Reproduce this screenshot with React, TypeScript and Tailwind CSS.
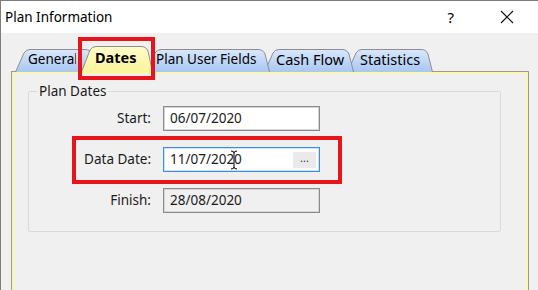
import React from 'react';

type TabProps = { id: string; label: string; w: number; active?: boolean; pl: number; clip?: number; size?: string; className?: string };

function Tab({ id, label, w, active, pl, clip, size, className }: TabProps) {
  const h = active ? 26 : 23;
  const d = `M0.5 ${h} L9 4 Q11 0.5 15 0.5 L${w - 12} 0.5 Q${w - 7} 0.5 ${w - 5} 5 L${w - 0.5} ${h}`;
  return (
    <div className={`relative flex-shrink-0 ${className ?? ''}`} style={{ width: w, height: h }}>
      <svg className="absolute inset-0" width={w} height={h} viewBox={`0 0 ${w} ${h}`}>
        <defs>
          <linearGradient id={`tabgrad-${id}`} x1="0" y1="0" x2="0" y2="1">
            <stop offset="0" stopColor={active ? '#fffcc9' : '#d9e7fb'} />
            <stop offset="1" stopColor={active ? '#fbf49c' : '#a8c7f3'} />
          </linearGradient>
        </defs>
        <path d={d} fill={`url(#tabgrad-${id})`} stroke="#8e8e8e" strokeWidth="1" />
      </svg>
      <span
        className={`relative block whitespace-nowrap leading-[18px] text-black ${clip ? 'overflow-hidden' : ''} ${active ? 'font-bold text-[14.5px] pt-[2px]' : `${size ?? 'text-[13.5px]'} pt-[1px]`}`}
        style={{ marginLeft: pl, width: clip }}
      >
        {label}
      </span>
    </div>
  );
}

export default function App() {
  return (
    <div className="relative w-[538px] h-[290px] overflow-hidden bg-[#f0f0f0] border-l border-t border-[#7d7d7d] font-['Noto_Sans',sans-serif] text-[13.5px] text-[#1a1a1a]">
      {/* title bar */}
      <div className="h-[32px] bg-white flex items-center pl-[4px] pr-[20px]">
        <span className="text-black text-[13.5px]">Plan Information</span>
        <span className="ml-auto text-[15px] text-black mr-[46px]">?</span>
        <svg width="14" height="14" viewBox="0 0 14 14" className="mr-[4px]">
          <path d="M1 1 L13 13 M13 1 L1 13" stroke="#111" strokeWidth="1.2" />
        </svg>
      </div>

      {/* tabs */}
      <div className="flex items-end h-[26px] mt-[13px] pl-[14px]">
        <Tab id="general" label="General" w={82} pl={13} clip={48} className="z-[1]" />
        <Tab id="dates" label="Dates" w={72} active pl={14} className="-ml-[16px] z-10" />
        <Tab id="userfields" label="Plan User Fields" w={124} pl={10} className="-ml-[7px] z-[3]" />
        <Tab id="cashflow" label="Cash Flow" w={90} pl={12} size="text-[14.5px]" className="-ml-[6px] z-[2]" />
        <Tab id="statistics" label="Statistics" w={86} pl={13} size="text-[14.5px]" className="-ml-[7px] z-[1]" />
      </div>

      {/* tab panel */}
      <div className="-mt-[1px] ml-[10px] w-[518px] h-[240px] border border-[#9a9a9a]">
        <div className="h-full border-2 border-[#fbf6b0] pt-[8px] pl-[14px]">
          <fieldset className="w-[473px] h-[150px] border border-[#d9d9d9] rounded-[2px] px-0">
            <legend className="ml-[8px] px-[2px] leading-[18px] text-[#1a1a1a]">Plan Dates</legend>
            <div className="flex flex-col gap-[16px] pt-[6px]">
              <div className="flex items-center">
                <span className="w-[122px] text-right">Start:</span>
                <div className="ml-[12px] w-[157px] h-[25px] flex items-center pl-[6px] bg-white border border-[#8a8a8a] shadow-[inset_0_0_0_1px_#d6d6d6]">
                  06/07/2020
                </div>
              </div>
              <div className="flex items-center">
                <span className="w-[122px] text-right">Data Date:</span>
                <div className="relative ml-[12px] w-[157px] h-[25px] flex items-center pl-[6px] bg-white border border-[#3b8de3] shadow-[inset_0_0_0_1px_#cfe3f8]">
                  11/07/2020
                  <div className="ml-auto mr-[3px] w-[23px] h-[16px] bg-[#eaeaea] flex items-center justify-center text-[11px] leading-none pb-[4px] text-[#333]">
                    ...
                  </div>
                  {/* mouse I-beam */}
                  <svg className="absolute left-[66px] top-[2px]" width="8" height="20" viewBox="0 0 8 20">
                    <path d="M1 1 Q4 1 4 3 L4 17 Q4 19 1 19 M7 1 Q4 1 4 3 M4 17 Q4 19 7 19" stroke="#000" strokeWidth="1" fill="none" />
                  </svg>
                </div>
              </div>
              <div className="flex items-center">
                <span className="w-[122px] text-right">Finish:</span>
                <div className="ml-[12px] w-[157px] h-[25px] flex items-center pl-[6px] bg-[#f0f0f0] border border-[#8a8a8a] shadow-[inset_0_0_0_1px_#d6d6d6]">
                  28/08/2020
                </div>
              </div>
            </div>
          </fieldset>
        </div>
      </div>

      {/* red annotation boxes */}
      <div className="absolute left-[77px] top-[36px] w-[77px] h-[43px] border-[4px] border-[#e8141c] z-20" />
      <div className="absolute left-[71px] top-[135px] w-[270px] h-[48px] border-[4px] border-[#e8141c] z-20" />
    </div>
  );
}
